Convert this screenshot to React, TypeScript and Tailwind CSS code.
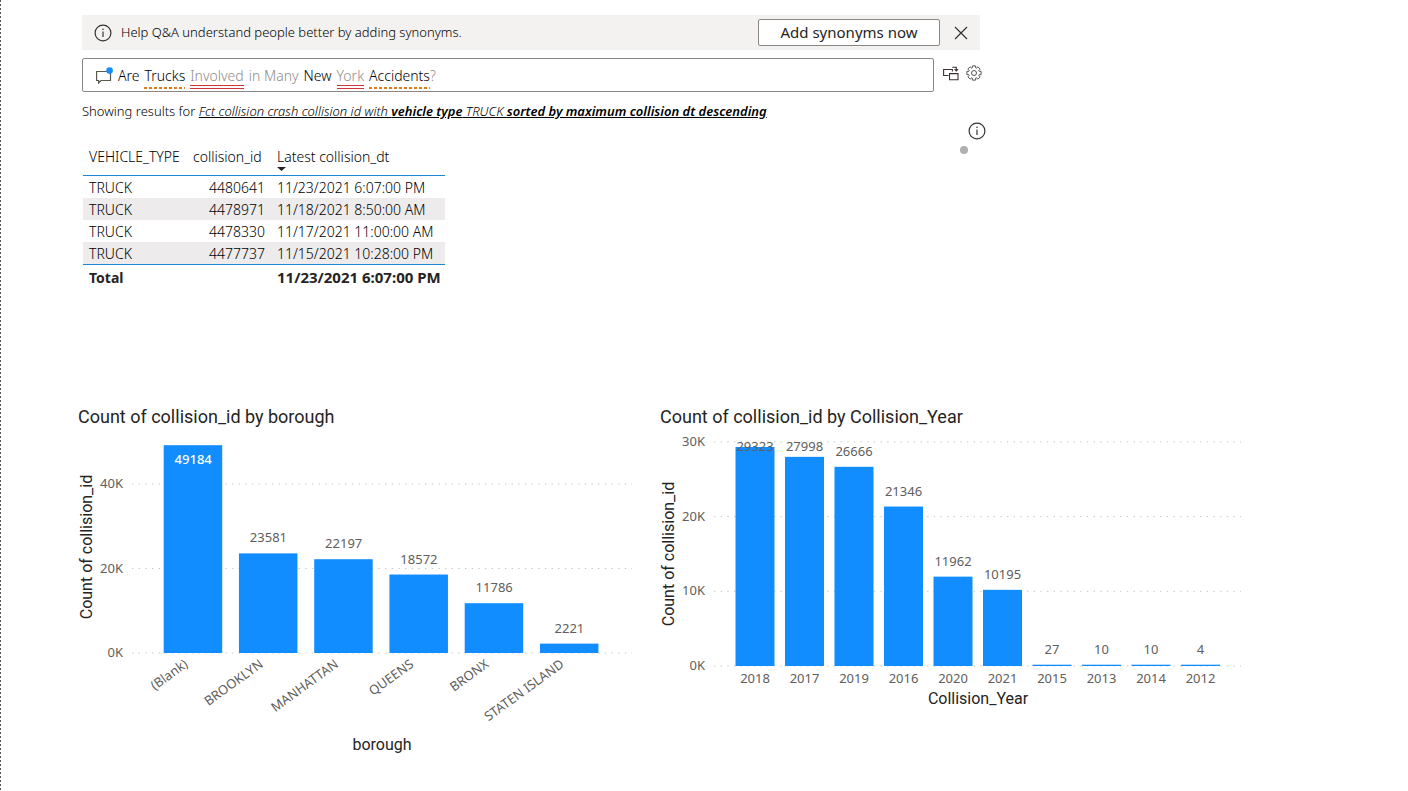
type Bar = { label: string; value: number };

const boroughs: Bar[] = [
  { label: "(Blank)", value: 49184 },
  { label: "BROOKLYN", value: 23581 },
  { label: "MANHATTAN", value: 22197 },
  { label: "QUEENS", value: 18572 },
  { label: "BRONX", value: 11786 },
  { label: "STATEN ISLAND", value: 2221 },
];

const years: Bar[] = [
  { label: "2018", value: 29323 },
  { label: "2017", value: 27998 },
  { label: "2019", value: 26666 },
  { label: "2016", value: 21346 },
  { label: "2020", value: 11962 },
  { label: "2021", value: 10195 },
  { label: "2015", value: 27 },
  { label: "2013", value: 10 },
  { label: "2014", value: 10 },
  { label: "2012", value: 4 },
];

const crashes = [
  ["TRUCK", "4480641", "11/23/2021 6:07:00 PM"],
  ["TRUCK", "4478971", "11/18/2021 8:50:00 AM"],
  ["TRUCK", "4478330", "11/17/2021 11:00:00 AM"],
  ["TRUCK", "4477737", "11/15/2021 10:28:00 PM"],
];

function InfoIcon() {
  return (
    <svg width="18" height="18" viewBox="0 0 18 18" fill="none" stroke="#333" aria-hidden="true">
      <circle cx="9" cy="9" r="7.9" strokeWidth="1.2" />
      <path d="M9 7.5V13" strokeWidth="1.2" />
      <circle cx="9" cy="5.3" r="0.8" fill="#333" stroke="none" />
    </svg>
  );
}

function CommentIcon() {
  return (
    <svg width="18" height="18" viewBox="0 0 18 18" fill="none" aria-hidden="true">
      <path d="M1.6 5.5H15.5V14.5H6L3.6 17V14.5H1.6Z" stroke="#5a5a50" strokeWidth="1.2" />
      <circle cx="14.6" cy="4.6" r="3.3" fill="#118dff" />
    </svg>
  );
}

function ConvertIcon() {
  return (
    <svg width="16" height="15" viewBox="0 0 16 15" fill="none" stroke="#3b3038" aria-hidden="true">
      <path d="M5.5 9.5H0.6V3.5H9.4V5.5" strokeWidth="1.1" />
      <path d="M6.5 7.6H15V13.8H6.5Z" strokeWidth="1.1" />
      <path d="M9.3 1.2H13.3V4.8M11.5 3.2L13.3 5L15.1 3.2" strokeWidth="1.1" />
    </svg>
  );
}

function GearIcon() {
  const teeth = Array.from({ length: 8 }, (_, i) => {
    const a = (i * Math.PI) / 4;
    return [
      [-0.32, 5.4],
      [-0.22, 7.3],
      [0.22, 7.3],
      [0.32, 5.4],
    ]
      .map(([d, r]) => `${(8 + r * Math.sin(a + d)).toFixed(2)},${(8 - r * Math.cos(a + d)).toFixed(2)}`)
      .join(" ");
  }).join(" ");
  return (
    <svg width="16" height="16" viewBox="0 0 16 16" fill="none" stroke="#555" strokeWidth="1" aria-hidden="true">
      <polygon points={teeth} strokeLinejoin="round" />
      <circle cx="8" cy="8" r="2.5" />
    </svg>
  );
}

function GridLine({ x1, x2, y, label }: { x1: number; x2: number; y: number; label: string }) {
  return (
    <g>
      <line x1={x1} x2={x2} y1={y} y2={y} stroke="#c4c4c4" strokeDasharray="1.33 5.33" />
      <text x={x1 - 9} y={y + 4} textAnchor="end" fill="#605e5c">
        {label}
      </text>
    </g>
  );
}

function BoroughChart() {
  const base = 223;
  const perUnit = 84.5 / 20000;
  return (
    <svg viewBox="0 0 562 326" className="mt-px block w-full font-['Noto_Sans',sans-serif] text-[13px]" role="img" aria-label="Count of collision_id by borough">
      {[0, 20, 40].map((t) => (
        <GridLine key={t} x1={54} x2={554} y={base - t * 1000 * perUnit} label={`${t}K`} />
      ))}
      {boroughs.map((b, i) => {
        const x = 85.7 + i * 75.25;
        const h = b.value * perUnit;
        const inside = i === 0;
        return (
          <g key={b.label}>
            <rect x={x} y={base - h} width="58.5" height={h} fill="#118dff" />
            <text x={x + 29.5} y={inside ? base - h + 19 : base - h - 11} textAnchor="middle" fill={inside ? "#fff" : "#605e5c"} className={inside ? "font-medium" : ""}>
              {b.value}
            </text>
            <text textAnchor="end" fill="#605e5c" transform={`translate(${x + 25} ${base + 13}) rotate(-36)`}>
              {b.label}
            </text>
          </g>
        );
      })}
      <text x="304" y="320" textAnchor="middle" fill="#252423" className="font-[Roboto,sans-serif] text-base">
        borough
      </text>
      <text textAnchor="middle" fill="#252423" transform="translate(14 117) rotate(-90)" className="font-[Roboto,sans-serif] text-base">
        Count of collision_id
      </text>
    </svg>
  );
}

function YearChart() {
  const base = 236;
  const perUnit = 74.7 / 10000;
  return (
    <svg viewBox="0 0 586 326" className="mt-px block w-full font-['Noto_Sans',sans-serif] text-[13px]" role="img" aria-label="Count of collision_id by Collision_Year">
      {[0, 10, 20, 30].map((t) => (
        <GridLine key={t} x1={54} x2={581} y={base - t * 1000 * perUnit} label={`${t}K`} />
      ))}
      {years.map((b, i) => {
        const x = 75.5 + i * 49.5;
        const h = Math.max(b.value * perUnit, 1.3);
        return (
          <g key={b.label}>
            <rect x={x} y={base - h} width="39" height={h} fill="#118dff" />
            <text x={x + 19.5} y={Math.max(base - h - 11, 21)} textAnchor="middle" fill="#605e5c">
              {b.value}
            </text>
            <text x={x + 19.5} y={base + 17} textAnchor="middle" fill="#605e5c">
              {b.label}
            </text>
          </g>
        );
      })}
      <text x="318" y="274" textAnchor="middle" fill="#252423" className="font-[Roboto,sans-serif] text-base">
        Collision_Year
      </text>
      <text textAnchor="middle" fill="#252423" transform="translate(14 124) rotate(-90)" className="font-[Roboto,sans-serif] text-base">
        Count of collision_id
      </text>
    </svg>
  );
}

function QuestionBox() {
  const partial =
    "bg-[repeating-linear-gradient(to_right,#e07b1a_0_3px,transparent_3px_5px)] bg-[length:100%_2px] bg-bottom bg-no-repeat";
  const unknown = "border-b-4 border-double border-[#d13438] text-[#8f8d8b]";
  return (
    <div className="relative flex h-[34px] flex-1 items-center gap-[5px] rounded-xs border border-[#8a8886] px-3 text-sm text-black">
      <CommentIcon />
      <div aria-hidden="true" className="flex gap-[5px] pt-[6px] leading-[18px] font-light whitespace-nowrap">
        <span>Are</span>
        <span className={partial}>Trucks</span>
        <span className={unknown}>Involved</span>
        <span className="text-[#8f8d8b]">in Many</span>
        <span>New</span>
        <span className={unknown}>York</span>
        <span className="flex">
          <span className={partial}>Accidents</span>
          <span className="text-[#8f8d8b]">?</span>
        </span>
      </div>
      <input
        aria-label="Ask a question about your data"
        defaultValue="Are Trucks Involved in Many New York Accidents?"
        className="absolute inset-0 bg-transparent pl-9 text-transparent caret-black outline-none"
      />
    </div>
  );
}

export default function App() {
  return (
    <main className="min-h-screen bg-white bg-[repeating-linear-gradient(to_bottom,#555_0_2px,transparent_2px_4px)] bg-[length:1px_100%] bg-no-repeat pt-[15px] font-['Noto_Sans',sans-serif] text-[#252423]">
      <section className="ml-[82px] max-w-[904px]">
        <div className="mr-[6px] flex h-[35px] items-center bg-[#f3f2f1] pr-3 pl-3">
          <InfoIcon />
          <p className="ml-[9px] flex-1 text-[13px] font-light text-black">Help Q&amp;A understand people better by adding synonyms.</p>
          <button className="h-[27px] w-[182px] rounded-xs border border-[#8a8886] bg-white text-[15px] leading-none text-[#252423]">
            Add synonyms now
          </button>
          <button aria-label="Close" className="ml-[14px]">
            <svg width="14" height="14" viewBox="0 0 14 14" stroke="#333" strokeWidth="1.2" aria-hidden="true">
              <path d="M1 1L13 13M13 1L1 13" />
            </svg>
          </button>
        </div>
        <div className="mt-2 flex items-center">
          <QuestionBox />
          <button aria-label="Turn this result into a visual" className="mb-1 ml-[9px]">
            <ConvertIcon />
          </button>
          <button aria-label="Settings" className="mr-1 mb-1 ml-[7px]">
            <GearIcon />
          </button>
        </div>
        <p className="mt-[9px] text-[13px] leading-5 font-light text-black">
          Showing results for{" "}
          <a href="#results" className="italic underline">
            Fct collision crash collision id with <b className="font-semibold">vehicle type</b> TRUCK <b className="font-semibold">sorted by maximum collision dt descending</b>
          </a>
        </p>
        <div className="flex items-start justify-between">
          <table id="results" className="mt-[26px] ml-px border-collapse text-sm leading-5 font-light text-black">
            <thead>
              <tr className="h-[28px] border-b border-[#1a86d8] text-left align-top">
                <th className="w-[104px] px-[6px] font-light">VEHICLE_TYPE</th>
                <th className="w-[84px] px-[6px] font-light">collision_id</th>
                <th aria-sort="descending" className="w-[174px] px-[6px] font-light">
                  Latest collision_dt
                  <svg width="9" height="4" viewBox="0 0 9 4" className="block" aria-hidden="true">
                    <path d="M0 0H9L4.5 4Z" fill="#252423" />
                  </svg>
                </th>
              </tr>
            </thead>
            <tbody>
              {crashes.map(([type, id, date]) => (
                <tr key={id} className="h-[22px] even:bg-[#edebeb]">
                  <td className="px-[6px] pt-[2px] pb-0">{type}</td>
                  <td className="px-[6px] pt-[2px] pb-0 text-right">{id}</td>
                  <td className="px-[6px] pt-[2px] pb-0">{date}</td>
                </tr>
              ))}
            </tbody>
            <tfoot>
              <tr className="h-[25px] border-t border-[#1a86d8] text-left align-baseline text-[#252423]">
                <th className="px-[6px] pt-[2px] font-bold">Total</th>
                <td />
                <td className="pt-[2px] pr-1 pl-[6px] text-[15px] font-bold whitespace-nowrap">11/23/2021 6:07:00 PM</td>
              </tr>
            </tfoot>
          </table>
          <div className="flex flex-col gap-[6px]">
            <button aria-label="Information" className="mt-px">
              <InfoIcon />
            </button>
            <span className="-ml-2 size-2 rounded-full bg-[#b0b0b0]" />
          </div>
        </div>
      </section>
      <section className="mt-[116px] grid max-w-[1246px] grid-cols-[562fr_586fr] gap-5 pl-[78px]">
        <article>
          <h2 className="font-[Roboto,sans-serif] text-lg leading-6">Count of collision_id by borough</h2>
          <BoroughChart />
        </article>
        <article>
          <h2 className="font-[Roboto,sans-serif] text-lg leading-6">Count of collision_id by Collision_Year</h2>
          <YearChart />
        </article>
      </section>
    </main>
  );
}
